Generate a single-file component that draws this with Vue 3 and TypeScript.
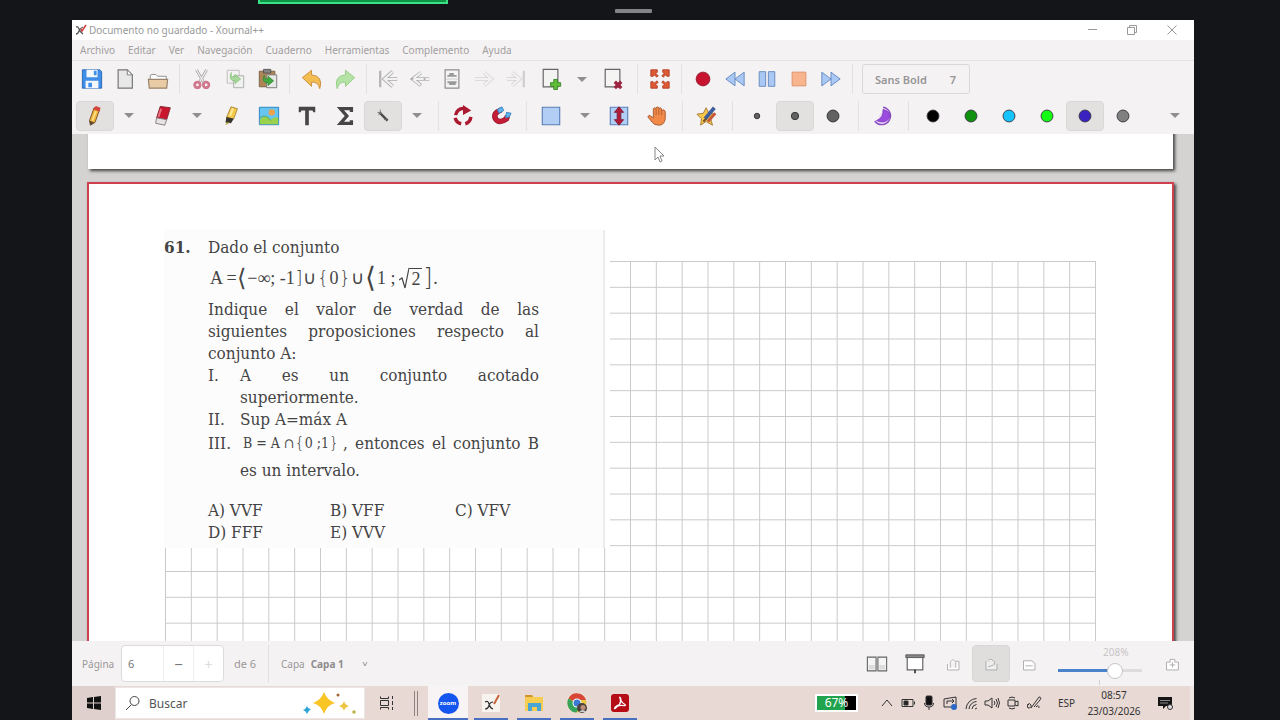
<script setup lang="ts">
import { ref } from 'vue'

const menus = ['Archivo', 'Editar', 'Ver', 'Navegación', 'Cuaderno', 'Herramientas', 'Complemento', 'Ayuda']
const colors = [
  { name: 'Negro', value: '#000000' },
  { name: 'Verde', value: '#12900f' },
  { name: 'Celeste', value: '#15c4fb' },
  { name: 'Lima', value: '#13fb13' },
  { name: 'Azul', value: '#3a22c0' },
  { name: 'Gris', value: '#808080' },
]
const selected = ref('Azul')
const sizes = [
  { name: 'Fino', r: 3 },
  { name: 'Medio', r: 4 },
  { name: 'Grueso', r: 6.5 },
]
const size = ref('Medio')
const page = ref('6')
const zoom = ref(72)
const step = 930 / 36
const columns = Array.from({ length: 37 }, (_, i) => i * step + 0.5)
const rows = Array.from({ length: 16 }, (_, i) => i * step + 0.5)
</script>

<template>
  <div class="screen">
    <header class="share"><span class="share-line"></span><span class="grip"></span></header>

    <main class="window">
      <div class="titlebar">
        <svg class="logo" viewBox="0 0 12 12"><path d="M1 3q2-1 3 2t4 5M8 3Q5 4 4 7T1 10" fill="none" stroke="#555" stroke-width="1.3" /><path d="M6 5l1 2 4-6" fill="none" stroke="#d33a3a" stroke-width="1.5" /></svg>
        <h1>Documento no guardado - Xournal++</h1>
        <button class="win" aria-label="Minimizar"><svg viewBox="0 0 12 12"><path d="M2 5.5h9" /></svg></button>
        <button class="win" aria-label="Restaurar"><svg viewBox="0 0 12 12"><path d="M1.500 3.500h7v7h-7zM3.500 3.500v-2h7v7h-2" /></svg></button>
        <button class="win" aria-label="Cerrar"><svg viewBox="0 0 12 12"><path d="M1.500 1.500l9 9M10.500 1.500l-9 9" /></svg></button>
      </div>

      <nav class="menubar">
        <button v-for="m in menus" :key="m">{{ m }}</button>
      </nav>

      <div class="tools first">
        <button class="t" aria-label="Guardar"><svg viewBox="0 0 24 24"><path d="M1.500 2h19l2 2v18h-21z" fill="#3f8ee8" stroke="#2565b5" /><path d="M6 2h12v8H6zM5 14h14v8H5z" fill="#f5f8fb" /><path d="M14 3h3v5h-3zM8 16h4v5H8z" fill="#3f8ee8" /></svg></button>
        <button class="t" aria-label="Nuevo"><svg viewBox="0 0 24 24"><path d="M4.500 2h10l5.500 5.500V22H4.500z" fill="#e9e8e8" stroke="#777" stroke-width="1.300" /><path d="M14.500 2v5.500H20z" fill="#fff" stroke="#777" /></svg></button>
        <button class="t" aria-label="Abrir"><svg viewBox="0 0 24 24"><path d="M3.500 13V8l2-1h4l2 2h9.500v4" fill="#fff" stroke="#888" /><path d="M1.500 12.500h21l-1 9.500h-19z" fill="#e9cba5" stroke="#98836b" stroke-width="1.300" /></svg></button>
        <span class="sep"></span>
        <button class="t" aria-label="Cortar"><svg viewBox="0 0 24 24"><path d="M6 2l8 14M17 2L9 16" stroke="#999" stroke-width="3" /><path d="M6 2l8 14M17 2L9 16" stroke="#ececec" stroke-width="1.500" /><circle cx="7" cy="18.500" r="3" fill="#f5f2f3" stroke="#d0778c" stroke-width="3" /><circle cx="16.500" cy="18.500" r="3" fill="#f5f2f3" stroke="#d0778c" stroke-width="3" /></svg></button>
        <button class="t" aria-label="Copiar"><svg viewBox="0 0 24 24"><path d="M3.500 2.500h13v14h-13z" fill="#f3f4f2" stroke="#b9bab8" /><path d="M10.500 8.500h11v13h-11z" fill="#eef1ed" stroke="#aaa" /><path d="M8 5q-2 5 4 5V7l6 5-6 5v-3Q4 14 8 5z" fill="#a8d79b" stroke="#8cc480" /></svg></button>
        <button class="t" aria-label="Pegar"><svg viewBox="0 0 24 24"><path d="M2.500 3.500h17v17h-17z" fill="#ae8555" stroke="#7b6041" /><path d="M7 1.500h8v4H7z" fill="#858585" stroke="#555" /><path d="M10.500 7.500h11v14h-11z" fill="#e8e9e7" stroke="#777" /><path d="M8 8q-2 4 4 4V9l6 5-6 5v-3Q4 16 8 8z" fill="#43a942" stroke="#388c37" /></svg></button>
        <span class="sep"></span>
        <button class="t" aria-label="Deshacer"><svg viewBox="0 0 24 24"><path d="M1.500 10.500l10-8v5q13 1 9 15-2-8-9-7v4.500z" fill="#f4bd52" stroke="#c68b38" /></svg></button>
        <button class="t" aria-label="Rehacer"><svg viewBox="0 0 24 24"><path d="M22.500 10.500l-10-8v5q-13 1-9 15 2-8 9-7v4.500z" fill="#b4e3a5" stroke="#8fca80" /></svg></button>
        <span class="sep"></span>
        <button class="t n" aria-label="Primera página"><svg viewBox="0 0 24 24"><path d="M3.500 3v18" stroke="#b5b5b5" stroke-width="2.500" /><path d="M17 4l-9 8 9 8M9 12h13" fill="none" stroke="#aaa" stroke-width="4" /><path d="M17 4l-9 8 9 8M9 12h13" fill="none" stroke="#f3f2f2" stroke-width="2.200" /></svg></button>
        <button class="t n" aria-label="Anterior"><svg viewBox="0 0 24 24"><path d="M13 5l-9 7 9 7M6 12h16" fill="none" stroke="#b2b2b2" stroke-width="4" /><path d="M13 5l-9 7 9 7M6 12h16" fill="none" stroke="#f3f2f2" stroke-width="2.200" stroke-dasharray="10 2" /></svg></button>
        <button class="t n" aria-label="Ir a página"><svg viewBox="0 0 24 24"><path d="M4.500 2h15v20h-15z" fill="#f4f4f4" stroke="#8e8e8e" stroke-width="1.300" /><path d="M7 8.500h10M9 6.500h5M7 15.500h10M9 17.500h7" stroke="#999" stroke-width="2" /><path d="M5 12h14" stroke="#ccc" /></svg></button>
        <button class="t n" aria-label="Siguiente"><svg viewBox="0 0 24 24"><path d="M12 5l8 7-8 7M2 12h16" fill="none" stroke="#d4d3d3" stroke-width="4" /><path d="M12 5l8 7-8 7M2 12h16" fill="none" stroke="#f3f1f1" stroke-width="2.400" /></svg></button>
        <button class="t n" aria-label="Última página"><svg viewBox="0 0 24 24"><path d="M20.500 3v18" stroke="#cfcfcf" stroke-width="2.500" /><path d="M8 5l8 7-8 7M2 12h12" fill="none" stroke="#d2d1d1" stroke-width="4" /><path d="M8 5l8 7-8 7M2 12h12" fill="none" stroke="#f3f1f1" stroke-width="2.400" /></svg></button>
        <button class="t w" aria-label="Añadir página"><svg viewBox="0 0 24 24"><path d="M3.500 1.500h16v19h-16z" fill="#f3f4f1" stroke="#666" stroke-width="1.300" /><path d="M15 12.500h4v3.500h3.500v4H19v3.500h-4V20h-3.500v-4H15z" fill="#61bd35" stroke="#39852a" /></svg></button>
        <button class="more slim" aria-label="Opciones"><i></i></button>
        <button class="t w" aria-label="Eliminar página"><svg viewBox="0 0 24 24"><path d="M3.500 1.500h16v19h-16z" fill="#f5f4f3" stroke="#666" stroke-width="1.300" /><path d="M14 15l7 7M21 15l-7 7" stroke="#9d2340" stroke-width="3.600" /></svg></button>
        <span class="sep"></span>
        <button class="t" aria-label="Pantalla completa"><svg viewBox="0 0 24 24"><path d="M2 2h7v2.500L7.500 6 10 8.500 8.500 10 6 7.500 4.500 9H2zM22 2h-7v2.500L16.500 6 14 8.500l1.500 1.500L18 7.500 19.500 9H22zM2 22h7v-2.500L7.500 18l2.500-2.500L8.500 14 6 16.500 4.500 15H2zM22 22h-7v-2.500l1.500-1.500-2.500-2.500 1.500-1.500 2.500 2.500 1.500-1.500H22z" fill="#dd5a35" stroke="#b23d25" /></svg></button>
        <span class="sep"></span>
        <button class="t n" aria-label="Grabar"><svg viewBox="0 0 24 24"><circle cx="12" cy="12" r="7.500" fill="#c81330" stroke="#8f1c2a" /></svg></button>
        <button class="t n" aria-label="Retroceder"><svg viewBox="0 0 24 24"><path d="M12 4.500v15L2 12zM22 4.500v15L12 12z" fill="#a9c9f4" stroke="#6488be" /></svg></button>
        <button class="t n" aria-label="Pausa"><svg viewBox="0 0 24 24"><path d="M3.500 4h7v16h-7zM13.500 4h7v16h-7z" fill="#a9c9f4" stroke="#6488be" /></svg></button>
        <button class="t n" aria-label="Detener"><svg viewBox="0 0 24 24"><path d="M4.500 4.500h15v15h-15z" fill="#f8b48d" stroke="#dc9068" /></svg></button>
        <button class="t n" aria-label="Avanzar"><svg viewBox="0 0 24 24"><path d="M2 4.500v15L12 12zM12 4.500v15L22 12z" fill="#a9c9f4" stroke="#6488be" /></svg></button>
        <span class="sep"></span>
        <button class="font"><span>Sans Bold</span><span>7</span></button>
      </div>

      <div class="tools second">
        <button class="t w on" aria-label="Lápiz"><svg viewBox="0 0 24 24"><path d="M11 3l6 2-5 14-5 3-1-5z" fill="#f1b53c" stroke="#754b2b" /><path d="M11 3l2-2 5 2-1 4-7-2z" fill="#d5443d" /><path d="M6 17l5 2-4 3z" fill="#5b4837" /><path d="M13 7L9 17" stroke="#fbdd82" stroke-width="2" /></svg></button>
        <button class="more" aria-label="Opciones de lápiz"><i></i></button>
        <button class="t w" aria-label="Borrador"><svg viewBox="0 0 24 24"><path d="M9 1.500l11 1.500-4 13-11-2z" fill="#c8162e" stroke="#842331" /><path d="M5 14l11 2-2 6-10-2z" fill="#e5e2e4" stroke="#847b80" /><path d="M10 4L7 13" stroke="#ec7280" stroke-width="2" /></svg></button>
        <button class="more" aria-label="Opciones de borrador"><i></i></button>
        <button class="t w" aria-label="Resaltador"><svg viewBox="0 0 24 24"><path d="M12 2l7 2-4 11-8-1z" fill="#f5ca4b" stroke="#aa853b" /><path d="M7 13l8 2-3 5-6-1z" fill="#35352e" /><path d="M7 19h4l-5 3z" fill="#b7a739" /><path d="M14 4l-3 8" stroke="#ffeda0" stroke-width="2" /></svg></button>
        <button class="t w" aria-label="Imagen"><svg viewBox="0 0 24 24"><path d="M1.500 2.500h21v19h-21z" fill="#67c5f1" stroke="#2680bd" /><circle cx="15" cy="8" r="3.500" fill="#eda34a" /><path d="M2 16q6-7 12 0 5-4 8-2v7H2z" fill="#9ad24c" /><path d="M2 14q6-5 12 3" fill="none" stroke="#4d9e5c" /></svg></button>
        <button class="t w" aria-label="Texto"><svg viewBox="0 0 24 24"><path d="M3 2h18v6h-2l-1-2h-4v16h-4V6H6L5 8H3z" fill="#464646" /></svg></button>
        <button class="t w" aria-label="LaTeX"><svg viewBox="0 0 24 24"><path d="M19 7.500V4H7l7 8-7 8h12v-3.500" fill="none" stroke="#464646" stroke-width="3.600" /></svg></button>
        <button class="t w on" aria-label="Forma"><svg viewBox="0 0 24 24"><path d="M8 8l9 9" stroke="#4b4b4b" stroke-width="2.600" /><path d="M7 11l3-3M6 8l5 1M9 5v5M13 16l4-1" stroke="#777" /></svg></button>
        <button class="more" aria-label="Opciones de forma"><i></i></button>
        <span class="sep"></span>
        <button class="t w" aria-label="Rotación"><svg viewBox="0 0 24 24"><path d="M4 11a8 8 0 0 1 9-7M20.500 13a8.500 8.500 0 0 1-6 7.500M10 20.500A8.500 8.500 0 0 1 3.500 14" fill="none" stroke="#aa1930" stroke-width="3.800" /><path d="M12 0l9 6-9 5z" fill="#aa1930" /></svg></button>
        <button class="t w" aria-label="Ajuste a cuadrícula"><svg viewBox="0 0 24 24"><path d="M12 5.500Q3 9 6 15q4 6 12 0l1-3" fill="none" stroke="#8d1a31" stroke-width="6" /><path d="M12 5.500Q3 9 6 15q4 6 12 0l1-3" fill="none" stroke="#c51c36" stroke-width="4.500" /><path d="M10 9l5-3-2-4-5 3zM17 14l4-1 2-4-5-1z" fill="#64b5ec" stroke="#3680be" /></svg></button>
        <span class="sep"></span>
        <button class="t w" aria-label="Selección"><svg viewBox="0 0 24 24"><path d="M2.500 2.500h19v19h-19z" fill="#b2cef4" stroke="#577eb7" stroke-width="1.200" /></svg></button>
        <button class="more" aria-label="Opciones de selección"><i></i></button>
        <button class="t w" aria-label="Espacio vertical"><svg viewBox="0 0 24 24"><path d="M2.500 2.500h19v19h-19z" fill="#b2cef4" stroke="#577eb7" stroke-width="1.200" /><path d="M12 2l5 6h-3v8h3l-5 6-5-6h3V8H7z" fill="#b21b37" stroke="#7b203a" /></svg></button>
        <button class="t w" aria-label="Mano"><svg viewBox="0 0 24 24"><path d="M8 14V4q1-2 3 0V3q2-2 3 0v1q2-2 3 0v2q3-2 4 1v8q-1 7-7 7-5 0-7-3l-5-6q1-3 3-1z" fill="#f18a49" stroke="#a45831" /><path d="M11 4v7M14 4v7M17 6v5" stroke="#b36133" /></svg></button>
        <span class="sep"></span>
        <button class="t w" aria-label="Predeterminado"><svg viewBox="0 0 24 24"><path d="M11 3l3 6 7 1-5 5 2 7-7-4-6 4 1-7-5-5 7-1z" fill="#f7c749" stroke="#a17836" /><path d="M10 15L20 3" stroke="#3e5d9b" stroke-width="4" /><path d="M13 18l8-9" stroke="#c65739" stroke-width="3" /><path d="M8 18l3-3" stroke="#6d4b29" stroke-width="2" /></svg></button>
        <span class="sep"></span>
        <button v-for="s in sizes" :key="s.name" class="t w" :class="{ on: size === s.name }" :aria-label="s.name" @click="size = s.name"><svg viewBox="0 0 24 24"><circle cx="12" cy="12" :r="s.r" fill="#626262" stroke="#303030" /></svg></button>
        <span class="sep"></span>
        <button class="t w" aria-label="Relleno"><svg viewBox="0 0 24 24"><path d="M12 2.500a9.500 9.500 0 1 1-9 15l3-1 3-7q4-1 3-7z" fill="#ead9f5" /><path d="M12 2.500a9.500 9.500 0 1 1-9 15" stroke="#8a4fc3" stroke-width="1.600" /><path d="M12 5q9 2 7 9-4 7-14 3 8-3 7-12z" fill="#9c4be0" stroke="#7d3bc0" /></svg></button>
        <span class="sep"></span>
        <button v-for="c in colors" :key="c.name" class="t w" :class="{ on: selected === c.name }" :aria-label="c.name" @click="selected = c.name"><svg viewBox="0 0 24 24"><circle cx="12" cy="12" r="6.500" :fill="c.value" stroke="#383a42" /></svg></button>
        <button class="more last" aria-label="Más herramientas"><i></i></button>
      </div>

      <section class="canvas">
        <div class="sheet previous"></div>
        <article class="sheet current">
          <svg class="grid" viewBox="0 0 932 389">
            <path v-for="x in columns" :key="'c' + x" :d="`M${x} 0V389`" />
            <path v-for="y in rows" :key="'r' + y" :d="`M0 ${y}H931`" />
          </svg>
          <div class="problem">
            <strong class="number">61.</strong>
            <div class="body">
              <p>Dado el conjunto</p>
              <p class="set"><span>A =</span><span class="big">⟨</span><span>−∞; -1</span><span class="br">]</span><span>∪</span><span class="br">{</span><span>0</span><span class="br">}</span><span>∪</span><span class="huge">⟨</span><span>1 ;</span><span class="root"><svg viewBox="0 0 10 22"><path d="M0 13l3-2 3 10 4-20" /></svg><span>2</span></span><span class="big">]</span><span>.</span></p>
              <p class="fill">Indique el valor de verdad de las</p>
              <p class="fill">siguientes proposiciones respecto al</p>
              <p>conjunto A:</p>
              <div class="item"><span>I.</span><div><p class="fill">A es un conjunto acotado</p><p>superiormente.</p></div></div>
              <div class="item"><span>II.</span><p>Sup A=máx A</p></div>
              <div class="item third"><span>III.</span><div><p class="mixed"><span class="inline-set"><span>B = A ∩</span><span class="br">{</span><span>0 ;1</span><span class="br">}</span></span><span class="fill">, entonces el conjunto B</span></p><p class="end">es un intervalo.</p></div></div>
              <div class="answers"><span>A) VVF</span><span>B) VFF</span><span>C) VFV</span><span>D) FFF</span><span>E) VVV</span></div>
            </div>
          </div>
        </article>
        <svg class="cursor" viewBox="0 0 12 18"><path d="M1 1v13l3-3 2 5 2-1-2-5h4z" fill="#fff" stroke="#888" /></svg>
      </section>

      <footer class="status">
        <label class="page-label" for="page">Página</label>
        <div class="spin"><input id="page" v-model="page" /><button aria-label="Menos">−</button><button class="off" aria-label="Más">+</button></div>
        <span class="of">de 6</span>
        <label class="layer"><span>Capa</span><select><option>Capa 1</option></select><svg viewBox="0 0 8 8"><path d="M2 2l2 4 2-4" /></svg></label>
        <div class="views">
          <button aria-label="Dos páginas"><svg viewBox="0 0 24 24"><path d="M1.500 4.500h9.500v15H1.500zM13 4.500h9.500v15H13z" fill="#f4f4f4" stroke="#656565" stroke-width="1.200" /><path d="M3 13h6.500v5H3zM14.500 13H21v5h-6.500z" fill="#dcdcdc" /></svg></button>
          <button aria-label="Presentación"><svg viewBox="0 0 24 24"><path d="M3.500 5v13.500h17V5" fill="#fff" stroke="#656565" stroke-width="1.300" /><path d="M2 2h20v3H2z" fill="#888" stroke="#555" /><path d="M12 18v4" stroke="#444" stroke-width="2" /></svg></button>
          <button aria-label="Alejar"><svg viewBox="0 0 24 24"><path d="M6 12v6.500h12.500V9H15M9 16v-6l3-3 3 3v6" fill="#fff" stroke="#aaa" /></svg></button>
          <button class="active" aria-label="Ajustar"><svg viewBox="0 0 24 24"><path d="M6.500 9v9.500h12V12M9 8q3-3 7 2v3M9 15l6-2" fill="#eee" stroke="#aaa" /></svg></button>
          <button aria-label="Tamaño original"><svg viewBox="0 0 24 24"><path d="M6 8.500h9l3.500 3v7H6zM8 14h8" fill="#fff" stroke="#aaa" /></svg></button>
        </div>
        <label class="zoom"><span>208%</span><input v-model="zoom" type="range" min="0" max="100" /><i></i></label>
        <button class="plus" aria-label="Acercar"><svg viewBox="0 0 24 24"><path d="M6 10v8.500h13V10h-4V7h-5v3zM12.500 10v6M9.500 13h6" fill="#fff" stroke="#aaa" /></svg></button>
      </footer>

      <div class="taskbar">
        <button class="start" aria-label="Inicio"><svg viewBox="0 0 16 16"><path d="M1 3l6-1v5.500H1zM8 2l7-1v6.500H8zM1 8.500h6V14l-6-1zM8 8.500h7V15l-7-1z" fill="#111" /></svg></button>
        <label class="search">
          <svg class="lens" viewBox="0 0 16 16"><circle cx="9.500" cy="6" r="4.500" /><path d="M6.500 9.500L1 15" /></svg>
          <input type="text" placeholder="Buscar" aria-label="Buscar" />
          <svg class="stars" viewBox="0 0 54 24"><path d="M21 1q3 8 11 11-8 2-11 11-3-9-11-11 8-3 11-11z" fill="#f9c526" /><path d="M41 10q1 4 5 5-4 1-5 5-1-4-5-5 4-1 5-5z" fill="#eec344" /><path d="M4 15q1 3 4 3-3 2-4 5-1-3-4-4 3-1 4-4z" fill="#2ca3d8" /><circle cx="35" cy="4" r="1.500" fill="#a36434" /><circle cx="51" cy="21" r="1.700" fill="#b8ad43" /></svg>
        </label>
        <button class="task-view" aria-label="Vista de tareas"><svg viewBox="0 0 16 16"><path d="M1.500 1.500v2h8v-2M1.500 14.500v-2h8v2M1.500 5.500h8v5h-8zM13.500 1v3M13.500 6v4M13.500 12v3" fill="none" stroke="#333" /></svg></button>
        <span class="double"></span>
        <div class="apps">
          <button class="app current-app" aria-label="Zoom"><span class="zoom-logo">zoom</span></button>
          <button class="app" aria-label="Xournal++"><svg viewBox="0 0 20 20"><path d="M1 1h18v18H1z" fill="#f7f3ef" /><path d="M4 9q3-2 4 2t4 5M12 9q-3 0-4 3.500T4 16" fill="none" stroke="#333" stroke-width="1.200" /><path d="M13 11l5-9" stroke="#c7643c" stroke-width="2" /></svg></button>
          <button class="app" aria-label="Explorador"><svg viewBox="0 0 20 20"><path d="M1 2h7l2 2h9v14H1z" fill="#f5cd50" /><path d="M1 2h7l1 2H1z" fill="#cf942f" /><path d="M4 18v-8h13v8h-4v-4H8v4z" fill="#4ba5d3" /></svg></button>
          <button class="app" aria-label="Chrome"><svg viewBox="0 0 20 20"><circle cx="10" cy="10" r="9.500" fill="#e9ca41" /><path d="M10 10L1.500 5.500A9.500 9.500 0 0 1 19 7H10z" fill="#d94537" /><path d="M1.500 5.500a9.500 9.500 0 0 0 8 14L13 13z" fill="#35a45a" /><circle cx="10" cy="10" r="4.500" fill="#fff" /><circle cx="10" cy="10" r="3.500" fill="#3c79d1" /><circle cx="15" cy="15" r="5" fill="#4b423f" /><circle cx="16" cy="14.500" r="2.500" fill="#bd9078" /><path d="M12 19q4-4 7 0" fill="#cecece" /></svg></button>
          <button class="app" aria-label="Acrobat"><svg viewBox="0 0 20 20"><rect x="1" y="1" width="18" height="18" rx="3" fill="#b50c16" /><path d="M4.500 15.500q0-2 5-4 2-3 .5-6.500Q9 3.500 10.500 5q0 4 4.500 6.500 1 1-1 1.200-4-.8-7 .8-1.500 2-2.500 2z" fill="none" stroke="#fff" stroke-width="1.300" /></svg></button>
        </div>
        <div class="tray">
          <span class="battery">67%</span>
          <div class="icons">
            <svg viewBox="0 0 16 16"><path d="M3 11l5-6 5 6" /></svg>
            <svg viewBox="0 0 16 16"><path d="M2 4.500h11v7H2zM14.500 6.500v3" /><path d="M4 6h4v4H4z" fill="#222" /></svg>
            <svg viewBox="0 0 16 16"><rect x="5" y="1" width="6" height="9" rx="1" fill="#111" /><path d="M3.500 8q0 4 4.500 4t4.500-4M8 12v3" /></svg>
            <svg viewBox="0 0 16 16"><path d="M2 4l12-2v10H2zM5 9V6h6M10 4l2 2-2 2" /><circle cx="12" cy="12" r="3" fill="#2c68c5" stroke="none" /></svg>
            <svg viewBox="0 0 16 16"><path d="M3 14A11 11 0 0 1 13.500 3.500M6 14a8 8 0 0 1 7.500-7.500M9 14a5 5 0 0 1 4.500-4.500M12 14l2-1" /></svg>
            <svg viewBox="0 0 16 16"><path d="M1 6h3l4-3v10l-4-3H1zM10 6q2 2 0 4M12 4q3 4 0 8M14 3q3 5 0 10" /></svg>
            <svg viewBox="0 0 16 16"><path d="M3 5h7v6H3zM10 7l3-1v5l-3-1M4 3q3-2 6 0M4 13q3 2 6 0" /></svg>
            <svg viewBox="0 0 16 16"><path d="M1 10q3-3 4 0t-3 3q-2-2 1-4M5 13l8-11q3 0 1 3l-6 7M10 12q3-3 3 1" /></svg>
          </div>
          <span class="lang">ESP</span>
          <time><span>08:57</span><span>23/03/2026</span></time>
          <svg class="note" viewBox="0 0 16 16"><path d="M1 2h14v9H9l-3 3v-3H1z" fill="#151515" /><path d="M3 5.500h10M3 8h8" stroke="#888" /><circle cx="13" cy="12" r="2.500" fill="#ddd" stroke="#333" /></svg>
        </div>
      </div>
    </main>
  </div>
</template>

<style>
body { background: #141518; }
</style>

<style scoped>
* { box-sizing: border-box; }
.screen { min-height: 100vh; display: flex; flex-direction: column; padding: 0 86px 0 72px; background: #141518; font-family: "Noto Sans", "Open Sans", sans-serif; }
button { border: 0; background: none; padding: 0; margin: 0; font: inherit; color: inherit; }
p, h1 { margin: 0; }
svg { display: block; flex: none; width: 16px; height: 16px; fill: none; }
.share { height: 20px; position: relative; }
.share-line { position: absolute; left: 186px; top: 0; width: 190px; height: 4px; background: #0f9447; border: solid #3bdf84; border-width: 0 2px 2px; }
.grip { position: absolute; left: 50%; top: 9px; width: 37px; height: 4px; margin-left: -18px; border-radius: 1px; background: #838385; }
.window { flex: 1; display: flex; flex-direction: column; background: #f5f2f3; min-width: 0; }

.titlebar { height: 20px; display: flex; align-items: center; background: #fff; padding: 0 2px 0 3px; }
.titlebar .logo { width: 12px; height: 12px; }
.titlebar h1 { flex: 1; font-size: 10px; font-weight: 400; color: #999; padding-left: 2px; }
.win { width: 40px; height: 20px; display: grid; place-items: center; }
.win svg { width: 12px; height: 12px; stroke: #999; }
.menubar { height: 21px; display: flex; align-items: center; gap: 13px; padding: 0 8px; border-bottom: 1px solid #e5e2e3; font-size: 10px; color: #a19fa0; }

.tools { display: flex; align-items: center; height: 36px; padding-left: 3px; }
.tools.second { padding-left: 4px; height: 37px; }
.t { width: 33px; height: 30px; display: grid; place-items: center; border-radius: 4px; flex: none; }
.t.n { width: 32px; }
.t.w { width: 38px; }
.t svg { width: 22px; height: 22px; }
.on { background: #e2e1e0; border: 1px solid #d9d7d7; }
.sep { width: 11px; height: 30px; flex: none; background: linear-gradient(#e4e1e2, #e4e1e2) center / 1px 100% no-repeat; }
.second .sep { width: 12px; }
.more { width: 30px; height: 30px; display: grid; place-items: center; flex: none; }
.more.slim { width: 24px; }
.more.last { margin-left: auto; margin-right: 4px; }
.more i { border: 5px solid transparent; border-top-color: #8f8f8f; border-bottom: 0; }
.font { height: 30px; width: 108px; margin-left: 4px; display: flex; justify-content: space-between; padding: 0 13px 0 12px; align-items: center; border: 1px solid #d9d7d8; border-radius: 3px; font-size: 11px; font-weight: 600; color: #969596; }

.canvas { position: relative; flex: 1; min-height: 507px; overflow: hidden; background: #d5d3d1; }
.sheet { position: absolute; left: 16px; right: 21px; background: #fff; box-shadow: 2px 2px 3px #444; }
.previous { top: -20px; height: 55px; }
.current { top: 48px; bottom: -20px; left: 15px; right: 20px; border: 2px solid #cf3f50; }
.grid { position: absolute; left: 76px; top: 77px; width: 932px; height: 389px; }
.grid path { stroke: #cacaca; }
.problem { position: absolute; left: 75px; top: 46px; width: 446px; height: 318px; padding-top: 6px; background: #fdfcfd; border-right: 5px solid #fff; box-shadow: inset -2px 0 0 #ececec; display: flex; font-family: "DejaVu Serif Condensed", "DejaVu Serif", serif; font-size: 17px; line-height: 22px; color: #444; }
.number { width: 44px; flex: none; }
.body { width: 331px; }
.body p { white-space: nowrap; }
.fill { text-align: justify; text-align-last: justify; }
.item { display: grid; grid-template-columns: 32px 1fr; }
.set { height: 40px; line-height: 40px; font-family: "Liberation Serif", serif; font-size: 18px; padding: 0 101px 0 2px; display: flex; align-items: center; justify-content: space-between; }
.br, .big, .huge { font-family: "DejaVu Sans", sans-serif; font-weight: 200; }
.br { font-size: 18px; }
.big { font-size: 24px; }
.huge { font-size: 28px; }
.root { display: flex; align-items: center; padding-left: 3px; }
.root svg { width: 10px; height: 22px; stroke: #444; stroke-width: 1.2; }
.root span { line-height: 20px; border-top: 1px solid #444; padding: 0 2px; }
.mixed { display: flex; line-height: 26px; gap: 5px; }
.mixed .fill { flex: 1; }
.third > span { line-height: 26px; }
.inline-set { width: 98px; padding-left: 3px; display: flex; align-items: center; justify-content: space-between; font-size: 14px; }
.inline-set .br { font-size: 16px; }
.body .end { line-height: 29px; }
.answers { display: grid; grid-template-columns: 122px 125px 1fr; margin-top: 14px; }
.cursor { position: absolute; left: 582px; top: 12px; width: 12px; height: 18px; }

.status { height: 45px; display: flex; align-items: center; font-size: 11px; color: #9a9899; padding: 0 3px 0 10px; }
.page-label { width: 39px; flex: none; font-size: 10px; }
.spin { display: flex; width: 103px; height: 37px; background: #fff; border: 1px solid #dedbdc; border-radius: 4px; overflow: hidden; }
.spin input { width: 41px; border: 0; padding: 0 6px; font: inherit; color: #777; background: none; }
.spin button { flex: 1; border-left: 1px solid #eee; font-size: 15px; color: #777; }
.spin .off { color: #ddd; }
.of { margin-left: 10px; width: 34px; flex: none; }
.layer { height: 38px; display: flex; align-items: center; border-left: 1px solid #e2dfe0; padding-left: 12px; font-size: 10px; }
.layer select { appearance: none; border: 0; background: none; font: inherit; font-weight: 700; padding: 0; width: 50px; color: #8d8b8c; margin-left: 6px; }
.layer svg { width: 8px; height: 8px; stroke: #999; }
.views { margin-left: auto; display: flex; }
.views button, .plus { width: 38px; height: 37px; display: grid; place-items: center; border-radius: 4px; flex: none; }
.views svg, .plus svg { width: 22px; height: 22px; }
.views .active { background: #dfdedd; border: 1px solid #d8d7d6; }
.zoom { width: 105px; height: 44px; padding: 4px 10px; flex: none; position: relative; }
.zoom span { display: block; font-size: 10px; line-height: 13px; padding-left: 45px; color: #c6c4c5; }
.zoom input { display: block; appearance: none; width: 84px; height: 18px; margin: 3px 0 0; background: linear-gradient(90deg, #4b82cc 70%, #dedcdd 70%) center / 100% 3px no-repeat; }
.zoom input::-webkit-slider-thumb { appearance: none; width: 16px; height: 16px; border-radius: 50%; background: #fff; border: 1px solid #c8c6c7; }
.zoom i { position: absolute; left: 51px; top: 38px; width: 1px; height: 5px; background: #d0cecf; }

.taskbar { height: 34px; display: flex; align-items: center; background: #e8d9d4; border-right: 4px solid #efe5e2; }
.start { width: 43px; height: 34px; display: grid; place-items: center; background: #e0d0cd; }
.search { width: 250px; height: 32px; background: #fff; border: 1px solid #ece7e6; display: flex; align-items: center; padding: 0 7px 0 9px; }
.lens { stroke: #444; }
.search input { flex: 1; min-width: 0; border: 0; outline: 0; background: none; padding: 0 0 0 8px; font: 12px "Noto Sans", sans-serif; color: #555; }
.search input::placeholder { color: #555; opacity: 1; }
.stars { width: 54px; height: 24px; }
.task-view { width: 44px; height: 34px; display: grid; place-items: center; }
.double { width: 4px; height: 25px; margin: 0 10px 0 5px; border: solid #8d8280; border-width: 0 1px; flex: none; }
.apps { display: flex; align-self: stretch; gap: 3px; }
.app { width: 40px; display: grid; place-items: center; background: linear-gradient(#496fc0, #496fc0) bottom / 34px 2px no-repeat; }
.app svg { width: 20px; height: 20px; }
.current-app { background-size: 40px 2px; background-color: #f8f3f4; }
.zoom-logo { width: 21px; height: 21px; line-height: 20px; border-radius: 50%; background: #1556ef; color: #fff; font-size: 6px; font-weight: 700; text-align: center; }
.tray { margin-left: auto; display: flex; align-items: center; padding-right: 17px; color: #333; }
.battery { width: 43px; height: 18px; line-height: 14px; margin-right: 21px; border: 2px solid #fff; background: linear-gradient(90deg, #22a44f 72%, #000 72%); color: #fff; text-align: center; font-size: 12px; }
.icons { display: flex; gap: 5px; margin-right: 16px; }
.icons svg { stroke: #333; stroke-width: 1; }
.lang { font-size: 10px; width: 20px; }
time { width: 72px; display: flex; flex-direction: column; text-align: center; font-size: 10px; line-height: 16px; margin-right: 7px; }
</style>
